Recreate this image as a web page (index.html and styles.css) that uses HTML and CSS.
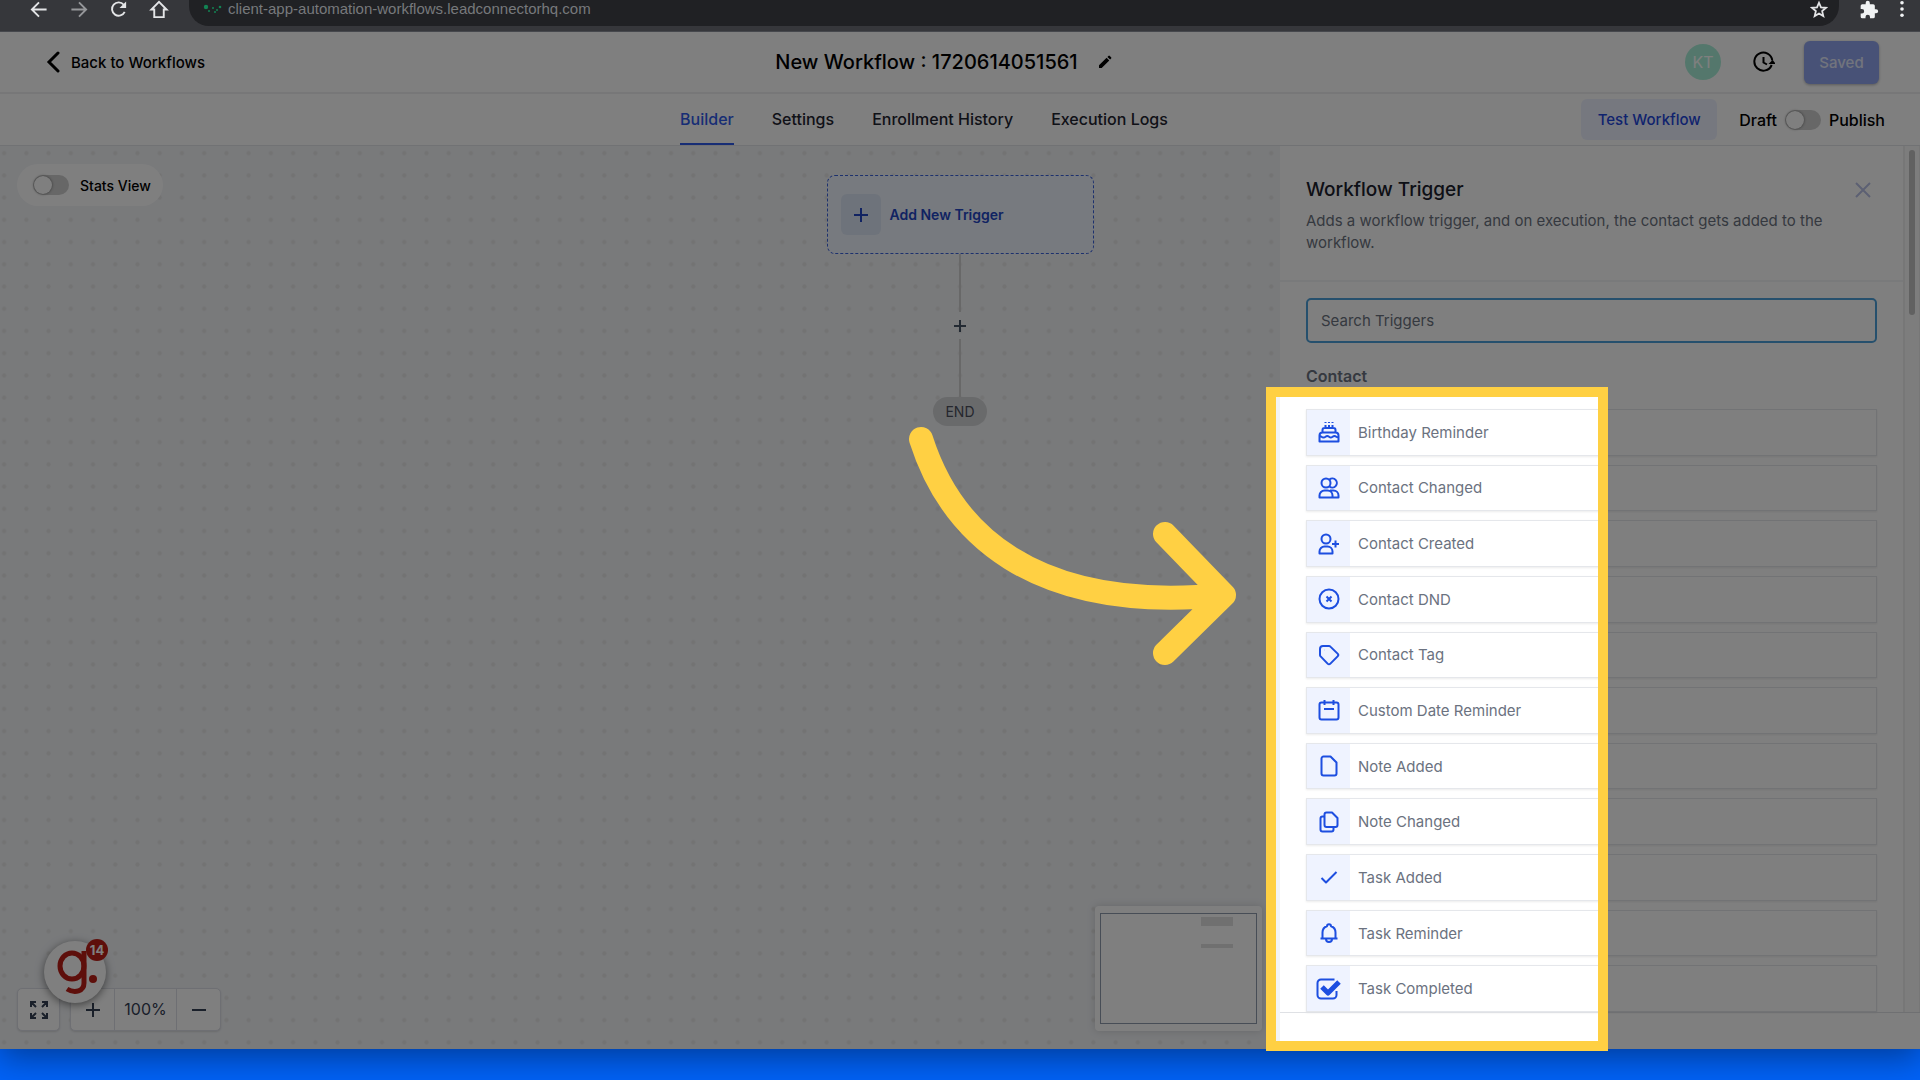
FILE: index.html
```html
<!DOCTYPE html>
<html lang="en">
<head>
<meta charset="utf-8">
<title>New Workflow : 1720614051561</title>
<link rel="stylesheet" href="styles.css">
</head>
<body>
<div class="browser-bar">
  <svg class="nav-icon" viewBox="0 0 20 20"><path d="M18 10H3M10 2.500L2.500 10l7.500 7.500"/></svg>
  <svg class="nav-icon nav-icon-muted" viewBox="0 0 20 20"><path d="M2 10h15M10 2.500l7.500 7.500-7.500 7.500"/></svg>
  <svg class="nav-icon" viewBox="0 0 20 20"><path d="M16 12.500A7 7 0 1 1 15 5"/><path class="solid" d="M17.500 1.500v7h-7z"/></svg>
  <svg class="nav-icon" viewBox="0 0 20 20"><path d="M5 18V10H2l8-8 8 8h-3v8z"/></svg>
  <div class="address">
    <svg class="favicon" viewBox="0 0 20 12"><circle cx="3" cy="4" r="2.200"/><circle cx="6" cy="8" r="1"/><circle cx="10" cy="5" r="1"/><circle cx="12" cy="9" r="1"/><circle cx="14" cy="7" r="1"/><circle cx="17" cy="4" r="1.300"/></svg>
    <span class="url">client-app-automation-workflows.leadconnectorhq.com</span>
    <svg class="star" viewBox="0 0 20 20"><path d="M10 2.500l2.200 5.100 5.500.5-4.200 3.700 1.300 5.500-4.800-2.900-4.800 2.900 1.300-5.500-4.200-3.700 5.500-.5z"/></svg>
  </div>
  <svg class="puzzle" viewBox="0 0 24 24"><path d="M20.500 11H19V7a2 2 0 0 0-2-2h-4V3.500a2.500 2.500 0 0 0-5 0V5H4a2 2 0 0 0-2 2v3.800h1.500a2.700 2.700 0 0 1 0 5.400H2V20a2 2 0 0 0 2 2h3.800v-1.500a2.700 2.700 0 0 1 5.400 0V22H17a2 2 0 0 0 2-2v-4h1.500a2.500 2.500 0 0 0 0-5z"/></svg>
  <svg class="kebab" viewBox="0 0 6 20"><circle cx="3" cy="3" r="2"/><circle cx="3" cy="10" r="2"/><circle cx="3" cy="17" r="2"/></svg>
</div>

<div class="app">
  <header class="header">
    <a class="back" href="#"><svg viewBox="0 0 14 22"><path d="M12 2L3 11l9 9"/></svg>Back to Workflows</a>
    <h1 class="title">New Workflow : 1720614051561
      <svg viewBox="0 0 14 14"><path d="M1 13v-2.700L8.600 2.700l2.700 2.700L3.700 13zM9.400 1.900l1-1a1 1 0 0 1 1.400 0l1.300 1.300a1 1 0 0 1 0 1.400l-1 1z"/></svg>
    </h1>
    <div class="header-actions">
      <span class="avatar">KT</span>
      <svg class="history" viewBox="0 0 22 22"><path d="M18.700 14A9 9 0 1 1 19.300 9.500"/><path d="M10.500 6v5.500l3.500 2"/><path class="solid" d="M15.500 13l4-4 3.500 4z"/></svg>
      <button class="saved">Saved</button>
    </div>
  </header>

  <div class="subheader">
    <nav class="tabs">
      <a class="tab tab-active" href="#">Builder</a>
      <a class="tab" href="#">Settings</a>
      <a class="tab" href="#">Enrollment History</a>
      <a class="tab" href="#">Execution Logs</a>
    </nav>
    <div class="publish">
      <button class="test">Test Workflow</button>
      <label class="draft" for="publish">Draft</label>
      <input class="toggle" id="publish" type="checkbox">
      <label for="publish">Publish</label>
    </div>
  </div>

  <main class="workspace">
    <section class="canvas">
      <svg class="dots"><defs><pattern id="grid" width="20" height="20" patternUnits="userSpaceOnUse" patternTransform="translate(-7 -4) scale(1.1115)"><circle cx="10" cy="10" r="1.900"/></pattern></defs><rect width="100%" height="100%" fill="url(#grid)"/></svg>
      <label class="stats"><input class="toggle" type="checkbox">Stats View</label>
      <div class="canvas-bottom">
        <div class="zoom">
          <button class="zoom-button boxed" aria-label="Fit to screen"><svg viewBox="0 0 20 20"><path d="M2 7V2h5M2 2l5 5M13 2h5v5M18 2l-5 5M2 13v5h5M2 18l5-5M18 13v5h-5M18 18l-5-5"/></svg></button>
          <div class="zoom-group boxed">
            <button class="zoom-button" aria-label="Zoom in"><svg viewBox="0 0 20 20"><path d="M10 3v14M3 10h14"/></svg></button>
            <span class="zoom-value">100%</span>
            <button class="zoom-button" aria-label="Zoom out"><svg viewBox="0 0 20 20"><path d="M3 10h14"/></svg></button>
          </div>
          <div class="widget">
            <svg viewBox="0 0 62 62"><ellipse cx="28" cy="25" rx="12" ry="13"/><path d="M40 10v32c0 8-9 11-17 6"/><circle class="dot" cx="49" cy="38" r="4"/></svg>
            <span class="count">14</span>
          </div>
        </div>
        <div class="minimap"><div class="minimap-view"><i class="mini-trigger"></i><i class="mini-end"></i></div></div>
      </div>
    </section>

    <div class="flow">
      <button class="trigger"><span class="trigger-plus"><svg viewBox="0 0 14 14"><path d="M7 0v14M0 7h14"/></svg></span>Add New Trigger</button>
      <div class="line"></div>
      <button class="add-step" aria-label="Add step"><svg viewBox="0 0 12 12"><path d="M6 0v12M0 6h12"/></svg></button>
      <div class="line"></div>
      <div class="end">END</div>
    </div>

    <aside class="panel">
      <div class="panel-scroll">
        <div class="panel-body">
          <div class="panel-head">
            <div class="panel-title-row">
              <h2>Workflow Trigger</h2>
              <button class="close" aria-label="Close"><svg viewBox="0 0 16 16"><path d="M1 1l14 14M15 1L1 15"/></svg></button>
            </div>
            <p>Adds a workflow trigger, and on execution, the contact gets added to the workflow.</p>
          </div>
          <div class="panel-list">
            <input class="search" type="text" placeholder="Search Triggers" aria-label="Search Triggers">
            <h3>Contact</h3>
            <ul class="triggers">
              <li><span class="cell"><svg viewBox="0 0 22 22"><path d="M1.500 20.500h19v-6a3 3 0 0 0-3-3h-13a3 3 0 0 0-3 3zM4.500 11.500V9a2 2 0 0 1 2-2h9a2 2 0 0 1 2 2v2.500M7.500 7V4M11 7V4M14.500 7V4M1.500 15c2 0 2 1.500 4 1.500s2-1.500 3.700-1.500 2 1.500 3.600 1.500 2-1.500 3.700-1.500 2 1.500 4 1.500M7.500 1v1M11 1v1M14.500 1v1"/></svg></span>Birthday Reminder</li>
              <li><span class="cell"><svg viewBox="0 0 22 22"><circle cx="8" cy="6" r="4.500"/><path d="M11.500 2.500a4.500 4.500 0 1 1 0 7M1.500 20.500v-2a5 5 0 0 1 5-5h3a5 5 0 0 1 5 5v2zM12 13.500h3.500a5 5 0 0 1 5 5v2h-6"/></svg></span>Contact Changed</li>
              <li><span class="cell"><svg viewBox="0 0 22 22"><circle cx="8" cy="6" r="4.500"/><path d="M1.500 20.500v-2a5 5 0 0 1 5-5h3a5 5 0 0 1 5 5v2zM17.500 7.500v7M14 11h7"/></svg></span>Contact Created</li>
              <li><span class="cell"><svg viewBox="0 0 22 22"><circle cx="11" cy="11" r="9.500"/><path d="M8.500 8.500l5 5M13.500 8.500l-5 5"/></svg></span>Contact DND</li>
              <li><span class="cell"><svg viewBox="0 0 22 22"><path d="M2 5a3 3 0 0 1 3-3h6a2 2 0 0 1 1.400.6l7.200 7a2 2 0 0 1 0 2.800l-7.200 7.200a2 2 0 0 1-2.800 0L2.600 12.400A2 2 0 0 1 2 11zM6 6h.1"/></svg></span>Contact Tag</li>
              <li><span class="cell"><svg viewBox="0 0 22 22"><rect x="1.500" y="3.500" width="19" height="17" rx="2"/><path d="M6.500 1v5M15.500 1v5M6 10h10"/></svg></span>Custom Date Reminder</li>
              <li><span class="cell"><svg viewBox="0 0 22 22"><path d="M3.500 3.500a2 2 0 0 1 2-2h7l6 6v11a2 2 0 0 1-2 2h-11a2 2 0 0 1-2-2z"/></svg></span>Note Added</li>
              <li><span class="cell"><svg viewBox="0 0 22 22"><path d="M6.500 3.500a2 2 0 0 1 2-2h5.500l5.500 5.500v7a2 2 0 0 1-2 2h-9a2 2 0 0 1-2-2zM6.500 5.500h-2a2 2 0 0 0-2 2v11a2 2 0 0 0 2 2h9a2 2 0 0 0 2-2v-2"/></svg></span>Note Changed</li>
              <li><span class="cell"><svg viewBox="0 0 22 22"><path d="M3.500 12l4.500 4.500L18.500 6"/></svg></span>Task Added</li>
              <li><span class="cell"><svg viewBox="0 0 22 22"><path d="M2.500 16.500h17M4.500 16.500v-6c0-3.500 1.800-5.500 4.500-6.300a2 2 0 0 1 4 0c2.700.8 4.500 2.800 4.500 6.300v6M8 17a3 3 0 0 0 6 0"/></svg></span>Task Reminder</li>
              <li><span class="cell"><svg class="done-icon" viewBox="0 0 26 22"><path d="M18.500 1.500H5a3.500 3.500 0 0 0-3.500 3.500v12A3.500 3.500 0 0 0 5 20.500h12a3.500 3.500 0 0 0 3.500-3.500v-4"/><path class="thick" d="M6 9l6 6L23 4"/></svg></span>Task Completed</li>
            </ul>
          </div>
        </div>
        <div class="scrollbar"><div class="thumb"></div></div>
      </div>
      <div class="panel-foot"></div>
      <div class="dim"></div>
      <div class="frame"></div>
    </aside>

    <svg class="arrow" viewBox="0 0 280 250"><path d="M15 15C44 106 124 190 318 171M259 110l59 61-59 58"/></svg>
  </main>
</div>
</body>
</html>
```
FILE: styles.css
```css
* { box-sizing: border-box; }

body {
  margin: 0;
  min-height: 100vh;
  display: flex;
  flex-direction: column;
  padding-bottom: 31px;
  overflow: hidden;
  background: #0062f7;
  color: #000;
  font-family: Inter, "Liberation Sans", sans-serif;
  font-size: 15px;
}

button, input { font: inherit; }
button { padding: 0; border: 0; background: none; color: inherit; }
a { color: inherit; text-decoration: none; }
h1, h2, h3, p, ul { margin: 0; padding: 0; }
svg { display: block; flex: none; fill: none; stroke: currentColor; }
.solid { fill: currentColor; stroke: none; }

/* Browser toolbar */
.browser-bar {
  height: 32px;
  display: flex;
  align-items: flex-start;
  gap: 20px;
  padding: 0 15px 0 29px;
  background: #36373b;
  border-bottom: 1px solid #46484d;
  color: #e4e5e7;
}
.nav-icon { width: 20px; height: 19px; stroke-width: 2; }
.nav-icon-muted { color: #96979a; }
.address {
  flex: 1;
  height: 26px;
  display: flex;
  align-items: flex-start;
  padding: 0 11px 0 14px;
  border-radius: 0 0 20px 20px;
  background: #202124;
}
.favicon { width: 20px; height: 12px; margin: 3px 5px 0 0; fill: #128353; stroke: none; }
.url { flex: 1; color: #77797c; font-family: "Liberation Sans", sans-serif; line-height: 18px; }
.star { width: 18px; height: 19px; stroke-width: 2; }
.puzzle { width: 20px; height: 20px; fill: #f1f3f4; stroke: none; }
.kebab { width: 6px; height: 18px; fill: #f1f3f4; stroke: none; }

/* Application */
.app {
  position: relative;
  flex: 1;
  display: flex;
  flex-direction: column;
  box-shadow: 0 8px 32px rgba(0, 0, 0, .4);
  clip-path: inset(0 0 -31px 0);
}
.header {
  height: 62px;
  display: grid;
  grid-template-columns: 1fr auto 1fr;
  align-items: center;
  padding: 0 41px 0 46px;
  background: #fff;
  border-bottom: 2px solid #eeeff1;
}
.back { display: flex; align-items: center; gap: 11px; font-weight: 500; }
.back svg { width: 14px; height: 22px; stroke-width: 3; stroke-linecap: round; }
.title {
  display: flex;
  align-items: center;
  gap: 20px;
  margin-right: 38px;
  font-size: 20px;
  font-weight: 500;
}
.title svg { width: 14px; height: 14px; fill: currentColor; stroke: none; }
.header-actions { display: flex; align-items: center; justify-content: flex-end; }
.avatar {
  width: 36px;
  height: 36px;
  margin-right: 32px;
  border-radius: 50%;
  background: #a9efd8;
  color: #fff;
  font-size: 16px;
  line-height: 36px;
  text-align: center;
}
.history { width: 22px; height: 22px; margin-right: 29px; stroke-width: 2; }
.saved {
  width: 75px;
  height: 43px;
  border-radius: 6px;
  background: #90a5ee;
  color: #e4e9fb;
  font-weight: 500;
  box-shadow: 0 1px 3px rgba(0, 0, 0, .3);
}

.subheader {
  position: relative;
  height: 52px;
  display: flex;
  justify-content: center;
  background: #fff;
  border-bottom: 1px solid #e3e5e9;
}
.tabs {
  display: flex;
  gap: 38px;
  margin-right: 72px;
  color: #1f2430;
  font-size: 16px;
  font-weight: 500;
}
.tab { display: flex; align-items: center; border-bottom: 2px solid transparent; }
.tab-active { border-color: #2f5bea; color: #2f5bea; }
.publish {
  position: absolute;
  right: 35px;
  top: 5px;
  display: flex;
  align-items: center;
  gap: 8px;
  font-size: 16px;
  font-weight: 500;
}
.test {
  width: 136px;
  height: 41px;
  margin-right: 14px;
  border-radius: 6px;
  background: #edf1ff;
  color: #1f47dc;
  font-size: 15px;
}
.toggle {
  appearance: none;
  width: 36px;
  height: 20px;
  margin: 0;
  padding: 1px;
  border-radius: 10px;
  background: #cfcfcf;
}
.toggle::before {
  content: "";
  display: block;
  width: 18px;
  height: 18px;
  border-radius: 50%;
  background: #fff;
  box-shadow: 0 0 3px rgba(0, 0, 0, .5);
}

.workspace { position: relative; flex: 1; display: flex; }

/* Canvas */
.canvas {
  position: relative;
  flex: 1;
  display: flex;
  flex-direction: column;
  align-items: flex-start;
  justify-content: space-between;
  padding: 18px 18px 18px 17px;
  background: #f2f4f7;
}
.dots { position: absolute; inset: 0; width: 100%; height: 100%; stroke: none; }
.dots circle { fill: #e6e6e6; }
.stats {
  position: relative;
  width: 146px;
  height: 42px;
  display: flex;
  align-items: center;
  gap: 11px;
  padding-left: 16px;
  border-radius: 21px;
  background: #fff;
  font-size: 14px;
  font-weight: 500;
}
.canvas-bottom {
  position: relative;
  width: 100%;
  display: flex;
  align-items: flex-end;
  justify-content: space-between;
}
.zoom { position: relative; display: flex; gap: 10px; color: #344054; }
.boxed {
  border: 1px solid #dcdee6;
  border-radius: 5px;
  background: #fff;
  box-shadow: 0 1px 2px rgba(0, 0, 0, .12);
}
.zoom-button { width: 43px; height: 43px; display: grid; place-items: center; }
.zoom-button svg { width: 20px; height: 20px; stroke-width: 2; }
.zoom-group { height: 43px; display: flex; align-items: center; }
.zoom-value {
  width: 63px;
  line-height: 41px;
  border: solid #dcdee6;
  border-width: 0 1px;
  font-size: 16px;
  text-align: center;
}
.widget {
  position: absolute;
  left: 27px;
  bottom: 28px;
  width: 62px;
  height: 62px;
  border-radius: 50%;
  background: #fff;
  box-shadow: 0 2px 8px rgba(0, 0, 0, .5);
  color: #bd1f17;
}
.widget svg { width: 62px; height: 62px; stroke-width: 5; }
.widget .dot { fill: currentColor; stroke: none; }
.count {
  position: absolute;
  right: -2px;
  top: -2px;
  width: 22px;
  height: 22px;
  border-radius: 50%;
  background: #bd1f17;
  color: #fff;
  font-size: 13px;
  font-weight: 700;
  line-height: 22px;
  text-align: center;
}
.minimap {
  width: 167px;
  padding: 7px 5px;
  border-radius: 4px;
  background: #fff;
  box-shadow: 0 0 8px rgba(0, 0, 0, .15);
}
.minimap-view {
  height: 111px;
  display: flex;
  flex-direction: column;
  align-items: flex-end;
  gap: 18px;
  padding: 3px 23px;
  border: 1px solid #8f9bad;
}
.mini-trigger, .mini-end { width: 32px; height: 9px; background: #e0e0e0; }
.mini-end { height: 4px; }

/* Workflow diagram */
.flow {
  position: absolute;
  inset: 29px 0 auto;
  display: flex;
  flex-direction: column;
  align-items: center;
}
.trigger {
  width: 267px;
  height: 79px;
  display: flex;
  align-items: center;
  gap: 9px;
  padding-left: 13px;
  border: 1px dashed #3b62db;
  border-radius: 8px;
  background: #eff4fe;
  color: #2347c5;
  font-size: 14px;
  font-weight: 600;
}
.trigger-plus {
  width: 40px;
  height: 41px;
  display: grid;
  place-items: center;
  border-radius: 6px;
  background: #dde7f6;
}
.trigger-plus svg { width: 14px; height: 14px; stroke-width: 2; }
.line { width: 2px; height: 58px; background: #d0d0d0; }
.add-step { height: 27px; display: grid; place-items: center; color: #475467; }
.add-step svg { width: 12px; height: 12px; stroke-width: 2; }
.end {
  width: 54px;
  border-radius: 15px;
  background: #d3d4d6;
  color: #4b4f5c;
  font-size: 14px;
  line-height: 29px;
  text-align: center;
}

/* Trigger panel */
.panel {
  position: relative;
  width: 640px;
  display: flex;
  flex-direction: column;
  background: #fff;
}
.panel-scroll { flex: 1; display: flex; }
.panel-body { flex: 1; display: flex; flex-direction: column; }
.scrollbar {
  width: 17px;
  padding: 4px;
  border: solid #efefef;
  border-width: 0 1px 0 2px;
  background: #fafafa;
}
.thumb { height: 165px; border-radius: 4px; background: #c2c2c2; }
.panel-head {
  height: 136px;
  padding: 30px 32px 0 26px;
  border-bottom: 2px solid #f3f4f6;
  color: #6b7280;
}
.panel-title-row { display: flex; align-items: center; justify-content: space-between; }
.panel-head h2 { color: #1b202c; font-size: 19px; font-weight: 500; line-height: 28px; }
.panel-head p { margin-top: 6px; line-height: 22px; }
.close { color: #b9c0e6; }
.close svg { width: 16px; height: 16px; stroke-width: 2; }
.panel-list { padding: 16px 26px 0; color: #6b7280; }
.search {
  width: 100%;
  height: 45px;
  display: block;
  padding: 0 13px;
  border: 2px solid #4da1da;
  border-radius: 5px;
  background: #fff;
}
.search::placeholder { color: #6b7280; opacity: 1; }
.panel-list h3 { margin: 20px 0; font-size: 16px; font-weight: 600; line-height: 26px; }
.triggers {
  height: 603px;
  display: grid;
  grid-auto-rows: 1fr;
  gap: 9px;
  list-style: none;
}
.triggers li {
  display: flex;
  align-items: center;
  gap: 8px;
  border: 1px solid #e5e7eb;
  box-shadow: 0 1px 2px rgba(0, 0, 0, .08);
}
.cell {
  width: 43px;
  align-self: stretch;
  display: grid;
  place-items: center;
  background: #eff3ff;
  color: #1d4ee0;
}
.cell svg { width: 22px; height: 22px; stroke-width: 2; stroke-linejoin: round; }
.cell .done-icon { width: 26px; }
.cell .thick { stroke-width: 5; }
.panel-foot { height: 37px; border-top: 1px solid #dfe1e5; }

/* Guided-tour spotlight */
.dim, .frame {
  position: absolute;
  left: -14px;
  top: 241px;
  width: 342px;
  pointer-events: none;
}
.dim {
  bottom: 0;
  box-shadow: 0 0 0 3000px rgba(0, 0, 0, .5);
  clip-path: inset(-355px -3000px 0 -3000px);
}
.frame { bottom: -2px; border: 10px solid #ffd043; }
.arrow {
  position: absolute;
  left: calc(50% - 54px);
  top: 278px;
  width: 280px;
  height: 250px;
  overflow: visible;
  color: #ffd043;
  stroke-width: 24;
  stroke-linecap: round;
  stroke-linejoin: round;
}
```
